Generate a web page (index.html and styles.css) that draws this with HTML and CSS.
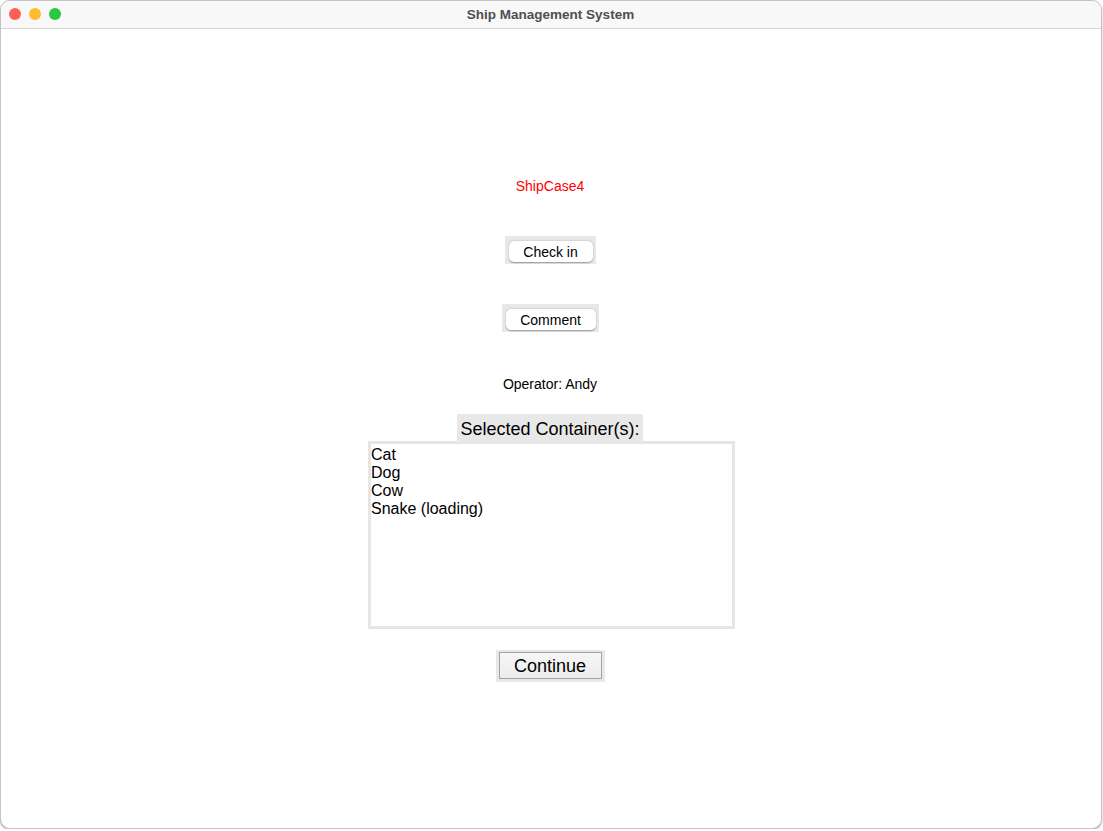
FILE: index.html
```html
<!DOCTYPE html>
<html>
<head>
<meta charset="utf-8">
<title>Ship Management System</title>
<link rel="stylesheet" href="styles.css">
</head>
<body>
<div class="window">
  <div class="titlebar">
    <div class="lights">
      <span class="light red"></span>
      <span class="light yellow"></span>
      <span class="light green"></span>
    </div>
    <div class="title">Ship Management System</div>
  </div>
  <div class="content">
    <div class="case">ShipCase4</div>
    <div class="btnbox checkin"><button class="rbtn">Check in</button></div>
    <div class="btnbox comment"><button class="rbtn">Comment</button></div>
    <div class="operator">Operator: Andy</div>
    <div class="label">Selected Container(s):</div>
    <div class="listbox">
      <div class="item">Cat</div>
      <div class="item">Dog</div>
      <div class="item">Cow</div>
      <div class="item">Snake (loading)</div>
    </div>
    <div class="contbox"><button class="cbtn">Continue</button></div>
  </div>
</div>
</body>
</html>
```
FILE: styles.css
```css
html, body {
  margin: 0;
  padding: 0;
  background: #ffffff;
  font-family: "Liberation Sans", Arial, sans-serif;
}
.window {
  width: 1102px;
  height: 829px;
  box-sizing: border-box;
  border: 1px solid #c4c4c4;
  border-radius: 10px;
  overflow: hidden;
  background: #ffffff;
  box-shadow: 0 1px 2px rgba(0,0,0,0.35);
}
.titlebar {
  position: relative;
  height: 28px;
  background: #f8f8f8;
  border-bottom: 1px solid #d6d6d6;
  box-sizing: border-box;
  display: flex;
  align-items: center;
  justify-content: center;
}
.lights {
  position: absolute;
  left: 8px;
  top: 7px;
  display: flex;
  gap: 8px;
}
.light {
  width: 12px;
  height: 12px;
  border-radius: 50%;
  display: block;
}
.red { background: #fe5f57; }
.yellow { background: #febc2e; }
.green { background: #28c840; }
.title {
  font-family: "Liberation Sans", Arial, sans-serif;
  font-weight: bold;
  font-size: 13.5px;
  color: #4f4f4f;
  padding-right: 1px;
}
.content {
  display: flex;
  flex-direction: column;
  align-items: center;
  padding-top: 149px;
  padding-right: 2px;
}
.case {
  color: #ff0000;
  font-size: 14px;
  line-height: 16px;
}
.btnbox {
  background: #e8e8e8;
  padding: 5px 3px 2px 4px;
  box-sizing: border-box;
  height: 28px;
}
.checkin { margin-top: 42px; width: 91px; }
.comment { margin-top: 40px; width: 97px; }
.rbtn {
  display: block;
  width: 100%;
  height: 21px;
  margin: 0;
  padding: 0;
  border: none;
  border-radius: 5px;
  background: #ffffff;
  box-shadow: 0 0.5px 1.5px rgba(0,0,0,0.35);
  font-family: "Liberation Sans", Arial, sans-serif;
  font-size: 14px;
  color: #000;
}
.operator {
  margin-top: 44px;
  font-size: 14px;
  line-height: 16px;
  color: #000;
}
.label {
  margin-top: 22px;
  background: #e8e8e8;
  height: 27px;
  line-height: 31px;
  width: 186px;
  text-align: center;
  font-size: 18px;
  color: #000;
}
.listbox {
  width: 367px;
  height: 188px;
  box-sizing: border-box;
  border: 3px solid #e6e6e6;
  padding: 2px 0 0 0;
  margin-left: 3px;
}
.item {
  font-size: 16px;
  line-height: 18px;
  color: #000;
}
.contbox {
  margin-top: 21px;
  background: #e8e8e8;
  width: 109px;
  height: 32px;
  box-sizing: border-box;
  padding: 2px 3px 3px 3px;
}
.cbtn {
  display: block;
  width: 100%;
  height: 27px;
  margin: 0;
  padding: 2px 0 0 0;
  border: 1px solid #a3a3a3;
  background: linear-gradient(#f6f6f6, #ececec);
  font-family: "Liberation Sans", Arial, sans-serif;
  font-size: 18px;
  color: #000;
}
```
